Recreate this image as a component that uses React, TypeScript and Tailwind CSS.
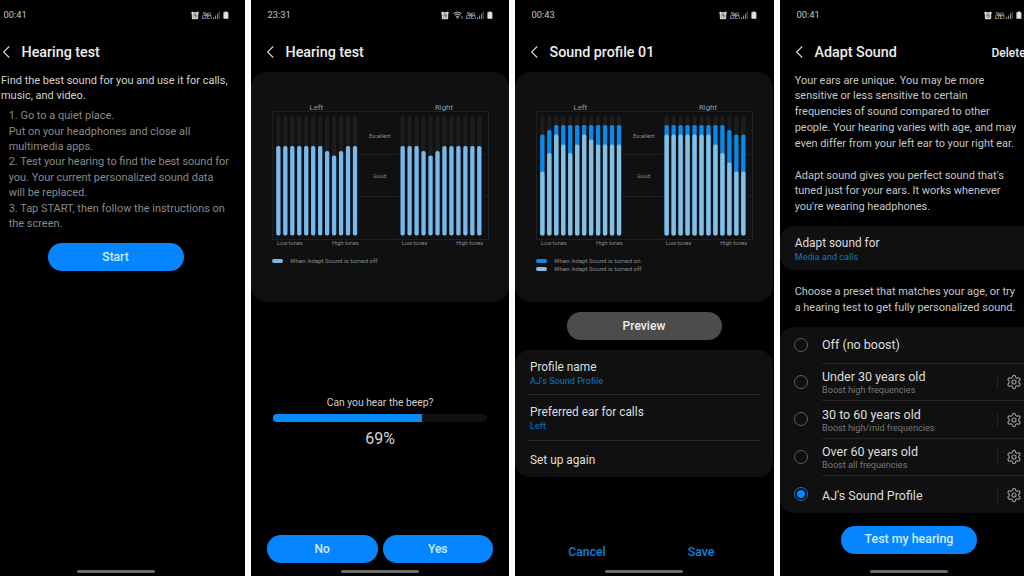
import type { ReactNode } from 'react'
import { Settings } from 'lucide-react'

interface Bar {
  off: number
  on?: number
}

interface StatusBarProps {
  time: string
  wifi?: boolean
}

interface ScreenProps extends StatusBarProps {
  title: string
  action?: string
  children: ReactNode
}

interface Preset {
  name: string
  hint?: string
  selected?: boolean
  editable?: boolean
}

// Bar heights in px, low tones first
const flat = (n: number): Bar[] => Array.from({ length: n }, () => ({ off: 89.5 }))
const dip: Bar[] = [{ off: 84.5 }, { off: 80 }, { off: 84.5 }]

const testLeft: Bar[] = [...flat(7), ...dip, ...flat(2)]
const testRight: Bar[] = [...flat(3), ...dip, ...flat(6)]

const profileLeft: Bar[] = [
  { on: 101, off: 64 },
  { on: 105.5, off: 82.5 },
  { on: 110.5, off: 101 },
  { on: 110.5, off: 91 },
  { on: 110.5, off: 82.5 },
  { on: 110.5, off: 91 },
  { on: 110.5, off: 101 },
  { on: 110.5, off: 96 },
  { on: 110.5, off: 91 },
  { on: 110.5, off: 91 },
  { on: 110.5, off: 91 },
  { on: 110.5, off: 91 },
]

const profileRight: Bar[] = [
  ...Array.from({ length: 7 }, () => ({ on: 110.5, off: 101 })),
  { on: 110.5, off: 91 },
  { on: 110.5, off: 82.5 },
  { on: 105.5, off: 73 },
  { on: 101, off: 64 },
  { on: 101, off: 64 },
]

const presets: Preset[] = [
  { name: 'Under 30 years old', hint: 'Boost high frequencies', editable: true },
  { name: '30 to 60 years old', hint: 'Boost high/mid frequencies', editable: true },
  { name: 'Over 60 years old', hint: 'Boost all frequencies', editable: true },
  { name: "AJ's Sound Profile", selected: true, editable: true },
]

function StatusBar({ time, wifi }: StatusBarProps) {
  return (
    <div className="flex h-[29px] shrink-0 items-center justify-between pl-[16.5px] pr-[16px] pt-px text-[#c4c4c4]">
      <span className="text-[9.3px]">{time}</span>
      <div className="flex items-center">
        <svg width="8" height="9" viewBox="0 0 8 9">
          <path d="M0.4 1.2L1.6 0.6L2.4 1.2h3.2L6.4 0.6L7.6 1.2v1.4L7.2 3.4v3.6L6.6 8.2H1.4L0.8 7V3.4L0.4 2.6z" fill="#dcdcdc" />
          <circle cx="4" cy="4.8" r="2.1" fill="none" stroke="#555" strokeWidth="0.5" />
          <path d="M4 3.4v1.6h1.3" fill="none" stroke="#111" strokeWidth="0.8" />
        </svg>
        {wifi && (
          <svg width="10" height="9" viewBox="0 0 10 9" className="ml-[4px]">
            <g fill="none" stroke="#aaa" strokeWidth="1.1">
              <path d="M0.5 2.7Q4.5 -0.6 8.5 2.7" />
              <path d="M1.8 4.3Q4.5 2 7.2 4.3" />
              <path d="M3 5.8Q4.5 4.6 6 5.8" />
            </g>
            <circle cx="4.5" cy="6.8" r="0.9" fill="#aaa" />
            <path d="M8.2 5.2v2.6M9.3 5.2v2.6" stroke="#999" strokeWidth="0.6" />
          </svg>
        )}
        <svg width="10" height="9" viewBox="0 0 10 9" className="ml-[3px]" fill="#b5b5b5" fontWeight="700">
          <text x="5" y="4" fontSize="4.4" textAnchor="middle">Vo))</text>
          <text x="5" y="8.2" fontSize="4.6" textAnchor="middle">LTE1</text>
        </svg>
        <svg width="7" height="8" viewBox="0 0 7 8" className="ml-[1px]" fill="#8c8c8c">
          <path d="M0 6h1.1v2H0zM2 4.4h1.1V8H2zM4 2.6h1.1V8H4z" />
          <path d="M5.8 0.8h0.9V8h-0.9z" fill="#666" />
        </svg>
        <svg width="6" height="8" viewBox="0 0 6 8" className="ml-[3px]" fill="#dedede">
          <path d="M1.8 0.4h2.2v0.9h1.4v6.5H0.4V1.3h1.4z" />
        </svg>
      </div>
    </div>
  )
}

function Screen({ time, wifi, title, action, children }: ScreenProps) {
  return (
    <div className="flex h-full w-[258px] shrink-0 flex-col bg-black">
      <StatusBar time={time} wifi={wifi} />
      <div className="flex h-[43px] shrink-0 items-center pl-[14.5px] pt-[3px]">
        <svg width="9" height="13" viewBox="0 0 9 13" fill="none" stroke="#d0d0d0" strokeWidth="1.2">
          <path d="M7.2 0.5L1.6 6L7.2 11.5" />
        </svg>
        <h1 className="ml-[11px] whitespace-nowrap pt-[2px] text-[14.3px] font-medium text-[#ededed]">{title}</h1>
        {action && <span className="ml-auto w-[46.5px] pt-px text-[12px] font-medium text-[#ededed]">{action}</span>}
      </div>
      <div className="flex min-h-0 flex-1 flex-col">{children}</div>
      <div className="mb-[3px] h-[3px] w-[78px] shrink-0 self-center rounded-full bg-[#6b6b6b]" />
    </div>
  )
}

function Bars({ x, bars, color }: { x: number; bars: Bar[]; color: string }) {
  return (
    <g>
      <rect x={x - 1} y={80} width={83.5} height={84} fill="#06111b" />
      {bars.map((bar, i) => {
        const left = x + i * 6.97
        return (
          <g key={i}>
            <rect x={left} y={44} width={4.3} height={119.5} rx={2} fill="#1d1d1d" />
            {bar.on && <rect x={left} y={163.5 - bar.on} width={4.3} height={bar.on} rx={1.6} fill="#068bec" />}
            <rect x={left} y={163.5 - bar.off} width={4.3} height={bar.off} rx={1.8} fill={color} />
          </g>
        )
      })}
    </g>
  )
}

function HearingChart({ left, right, color }: { left: Bar[]; right: Bar[]; color: string }) {
  return (
    <svg width="258" height="178" viewBox="0 0 258 178" className="shrink-0">
      <g fill="none" stroke="#202020" strokeWidth="1">
        <rect x="21.5" y="39.5" width="216" height="128" />
        <path d="M21.5 82.5h216M21.5 124.5h216" />
      </g>
      <Bars x={25.2} bars={left} color={color} />
      <Bars x={149.5} bars={right} color={color} />
      <g fill="#9a9a9a" fontSize="7.8" textAnchor="middle">
        <text x="65.3" y="37.7">Left</text>
        <text x="193" y="37.7">Right</text>
      </g>
      <g fill="#8c8c8c" fontSize="5.4" textAnchor="middle">
        <text x="128.8" y="65.8">Excellent</text>
        <text x="128.8" y="105.7">Good</text>
      </g>
      <g fill="#8c8c8c" fontSize="5.6">
        <text x="26" y="172.8">Low tones</text>
        <text x="107.8" y="172.8" textAnchor="end">High tones</text>
        <text x="150.7" y="172.8">Low tones</text>
        <text x="232.2" y="172.8" textAnchor="end">High tones</text>
      </g>
    </svg>
  )
}

function Legend({ swatch, label }: { swatch: string; label: string }) {
  return (
    <div className="flex h-[8.6px] items-center pl-[21px]">
      <span className={`h-[4px] w-[10.5px] rounded-full ${swatch}`} />
      <span className="ml-[7.5px] whitespace-nowrap pt-px text-[6.2px] text-[#8a8a8a]">{label}</span>
    </div>
  )
}

function SettingRow({ title, value }: { title: string; value: string }) {
  return (
    <div className="flex flex-col">
      <span className="text-[11.85px] leading-[15px] text-[#dedede]">{title}</span>
      <span className="text-[9.1px] leading-[13px] text-[#0878c8]">{value}</span>
    </div>
  )
}

function Radio({ selected }: { selected?: boolean }) {
  return (
    <span
      className={`flex size-[14px] shrink-0 items-center justify-center rounded-full border ${
        selected ? 'border-[#0878e0]' : 'border-[#5e5e5e]'
      }`}
    >
      {selected && <span className="size-[8px] rounded-full bg-[#0787ff]" />}
    </span>
  )
}

function PresetRow({ name, hint, selected, editable }: Preset) {
  return (
    <div className="flex h-[37.5px] items-center pl-[14px]">
      <Radio selected={selected} />
      <div className="ml-[14px] flex h-full flex-1 items-center border-t border-[#242424]">
        <div className="flex flex-1 flex-col pt-[2px]">
          <span className="text-[12.5px] leading-[15px] text-[#dedede]">{name}</span>
          {hint && <span className="text-[9.15px] leading-[13px] text-[#777]">{hint}</span>}
        </div>
        {editable && (
          <div className="flex w-[41px] items-center">
            <span className="h-[14px] w-px bg-[#242424]" />
            <Settings size={16} strokeWidth={1.8} className="ml-[7.5px] text-[#969696]" />
          </div>
        )}
      </div>
    </div>
  )
}

export default function App() {
  return (
    <div className="flex h-[576px] w-[1024px] overflow-hidden bg-white font-['Roboto',sans-serif]">
      {/* Intro */}
      <div className="flex w-[245px] shrink-0 justify-end overflow-hidden bg-black">
        <Screen time="00:41" title="Hearing test">
          <p className="whitespace-nowrap pl-[14px] pt-[0.5px] text-[10.96px] leading-[15.8px] text-[#d2d2d2]">
            Find the best sound for you and use it for calls,
            <br />
            music, and video.
          </p>
          <p className="mt-[4px] whitespace-nowrap pl-[21.7px] text-[10.96px] leading-[15.45px] text-[#898989]">
            1. Go to a quiet place.
            <br />
            Put on your headphones and close all
            <br />
            multimedia apps.
            <br />
            2. Test your hearing to find the best sound for
            <br />
            you. Your current personalized sound data
            <br />
            will be replaced.
            <br />
            3. Tap START, then follow the instructions on
            <br />
            the screen.
          </p>
          <button className="ml-[60.5px] mt-[11px] h-[28px] w-[136px] rounded-full bg-[#0585ff] text-[12px] font-medium text-[#cdeeff]">
            Start
          </button>
        </Screen>
      </div>

      {/* Test in progress */}
      <div className="ml-[6px] flex w-[258px] shrink-0 overflow-hidden bg-black">
        <Screen time="23:31" wifi title="Hearing test">
          <div className="h-[230px] shrink-0 rounded-[16px] bg-[#101010]">
            <HearingChart left={testLeft} right={testRight} color="#78b9ea" />
            <div className="mt-[6.5px]">
              <Legend swatch="bg-[#78b9ea]" label="When Adapt Sound is turned off" />
            </div>
          </div>
          <div className="mt-[94px] flex flex-col items-center">
            <span className="text-[10.3px] leading-[14px] text-[#cfcfcf]">Can you hear the beep?</span>
            <div className="mt-[4px] h-[8px] w-[214px] overflow-hidden rounded-full bg-[#101010]">
              <div className="h-full bg-[#058bfa]" style={{ width: '69.5%' }} />
            </div>
            <span className="mt-[7px] text-[16px] leading-[20px] text-[#d6d6d6]">69%</span>
          </div>
          <div className="mb-[7px] mt-auto flex justify-center gap-[5px] text-[12px] font-medium text-[#cdeeff]">
            <button className="h-[28px] w-[110.5px] rounded-full bg-[#0585ff]">No</button>
            <button className="h-[28px] w-[110.5px] rounded-full bg-[#0585ff]">Yes</button>
          </div>
        </Screen>
      </div>

      {/* Saved profile */}
      <div className="ml-[6px] flex w-[259px] shrink-0 overflow-hidden bg-black">
        <Screen time="00:43" title="Sound profile 01">
          <div className="h-[230px] shrink-0 rounded-[16px] bg-[#101010]">
            <HearingChart left={profileLeft} right={profileRight} color="#88bfdf" />
            <div className="mt-[6.5px]">
              <Legend swatch="bg-[#068bec]" label="When Adapt Sound is turned on" />
              <Legend swatch="bg-[#88bfdf]" label="When Adapt Sound is turned off" />
            </div>
          </div>
          <button className="mt-[10px] h-[28px] w-[155px] shrink-0 self-center rounded-full bg-[#4c4c4c] text-[12.1px] font-medium text-[#ececec]">
            Preview
          </button>
          <div className="mt-[10px] h-[127px] shrink-0 rounded-[15px] bg-[#101010] px-[12px]">
            <div className="h-[45px] border-b border-[#292929] pl-[3px] pt-[10px]">
              <SettingRow title="Profile name" value="AJ's Sound Profile" />
            </div>
            <div className="h-[45.5px] border-b border-[#292929] pl-[3px] pt-[10px]">
              <SettingRow title="Preferred ear for calls" value="Left" />
            </div>
            <div className="pl-[3px] pt-[12px] text-[11.85px] leading-[15px] text-[#dedede]">Set up again</div>
          </div>
          <div className="mb-[10px] mt-auto flex text-[12.2px] font-medium leading-[16px] text-[#0a84dc]">
            <button className="ml-[15px] w-[114px]">Cancel</button>
            <button className="w-[114px]">Save</button>
          </div>
        </Screen>
      </div>

      {/* Presets */}
      <div className="ml-[6px] flex w-[244px] shrink-0 overflow-hidden bg-black">
        <Screen time="00:41" title="Adapt Sound" action="Delete">
          <p className="whitespace-nowrap pl-[14.7px] pt-[0.5px] text-[10.95px] leading-[15.85px] text-[#c6c6c6]">
            Your ears are unique. You may be more
            <br />
            sensitive or less sensitive to certain
            <br />
            frequencies of sound compared to other
            <br />
            people. Your hearing varies with age, and may
            <br />
            even differ from your left ear to your right ear.
            <br />
            <br />
            Adapt sound gives you perfect sound that's
            <br />
            tuned just for your ears. It works whenever
            <br />
            you're wearing headphones.
          </p>
          <div className="mt-[11px] h-[44px] shrink-0 rounded-[14px] bg-[#101010] pl-[14.7px] pt-[9.5px]">
            <SettingRow title="Adapt sound for" value="Media and calls" />
          </div>
          <p className="mt-[14px] whitespace-nowrap pl-[14.7px] text-[10.95px] leading-[15.85px] text-[#c6c6c6]">
            Choose a preset that matches your age, or try
            <br />
            a hearing test to get fully personalized sound.
          </p>
          <div className="mt-[11px] h-[186px] shrink-0 rounded-[14px] bg-[#101010]">
            <div className="flex h-[36px] items-center pl-[14px] pt-px">
              <Radio />
              <span className="ml-[14px] pt-px text-[12.5px] text-[#dedede]">Off (no boost)</span>
            </div>
            {presets.map((preset) => (
              <PresetRow key={preset.name} {...preset} />
            ))}
          </div>
          <button className="mt-[13px] h-[28px] w-[136px] shrink-0 self-center rounded-full bg-[#0585ff] text-[12.4px] font-medium text-[#cdeeff]">
            Test my hearing
          </button>
        </Screen>
      </div>
    </div>
  )
}
